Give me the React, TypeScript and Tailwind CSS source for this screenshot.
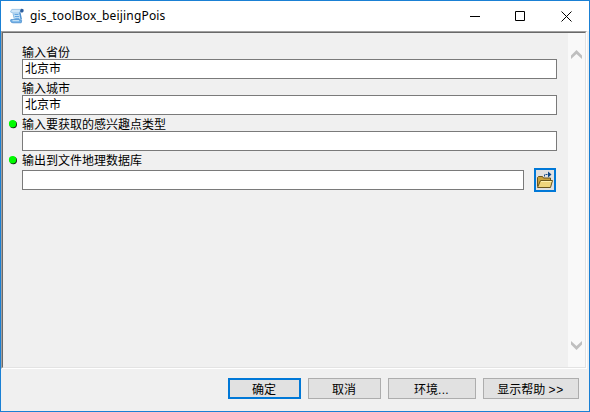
import type { ReactNode } from "react";

const cjk = "font-['Liberation_Sans','Noto_Sans_CJK_SC',sans-serif]";

function ScriptIcon() {
  return (
    <svg width="16" height="16" viewBox="0 0 16 16">
      <path d="M3.500 2H12l-1.500 3 2.300 7-2 2H4l1.500-2.500L4 6z" fill="#c6e2f7" />
      <path d="M2.800 1.400h9L10.500 5H4L1.500 4z" fill="#cfe6f8" stroke="#8dbce4" strokeWidth=".8" />
      <path d="M12 .9c2-.3 2.900.7 2.600 2-.2 1.200-1.200 1.800-2.700 1.600-.9-.4-1.100-2.200.1-3.600z" fill="#2c5f9e" />
      <path d="M10.800 4.500 12.300 11.500" stroke="#4b8fd0" strokeWidth="1.400" />
      <path d="M4 5.500l1.300 5.500" stroke="#8abce4" />
      <path d="M5.500 6.500h4M5.800 8.500h4.400M6.200 10.400h4" stroke="#5a9fdc" strokeWidth=".9" />
      <path d="M1.800 11.600h8.700l2.200 1-.5 2.200H4c-2 0-3-1.800-2.200-3.200z" fill="#73b2e8" stroke="#3f85c8" strokeWidth=".7" />
      <path d="M3.500 12.700h6.500" stroke="#d6ecfb" />
    </svg>
  );
}

function FolderIcon() {
  return (
    <svg width="18" height="18" viewBox="0 0 18 18" className="shrink-0">
      <path d="M1.500 15.500v-9l1-1h4l1 1.500h7v3" fill="#c9a13c" stroke="#6b561c" />
      <path d="M1.500 16.500 4.500 9.500h12L14.500 16.500z" fill="#efd57c" stroke="#6b561c" />
      <path d="M5 10.500h10.500" stroke="#fff1b0" />
      <path d="M8.500 5.500v-2H13" fill="none" stroke="#164a86" strokeDasharray="2 1" />
      <path d="M12 .5 15.500 3.500 12 6.500z" fill="#0d4686" />
    </svg>
  );
}

function Dot() {
  return (
    <svg width="10" height="10" viewBox="0 0 10 10" className="ml-[5px] mt-px shrink-0">
      <circle cx="5.300" cy="5.500" r="3.700" fill="#111" />
      <circle cx="4.600" cy="4.700" r="3.700" fill="#00fa00" />
    </svg>
  );
}

function Label({ children, required = false }: { children: ReactNode; required?: boolean }) {
  return (
    <div className="flex h-4 items-center">
      <div className="flex w-[19px] shrink-0">{required && <Dot />}</div>
      <span className="whitespace-nowrap pt-[3px] text-[12px] leading-4">{children}</span>
    </div>
  );
}

function Field({ value = "" }: { value?: string }) {
  return (
    <div className="ml-[19px] mr-[11px] flex h-5 items-center border border-[#7a7a7a] bg-white pl-[2px] text-[12px] leading-4">
      {value}
    </div>
  );
}

function Chevron({ down = false }: { down?: boolean }) {
  return (
    <svg width="11" height="9" viewBox="0 0 11 9" className={down ? "rotate-180" : ""}>
      <path d="M0 5.500 5.500 0 11 5.500V9L5.500 4 0 9z" fill="#bfbfbf" />
    </svg>
  );
}

function Button({ children, className }: { children: ReactNode; className: string }) {
  return (
    <button className={`flex h-[21px] items-center justify-center whitespace-nowrap bg-[#e1e1e1] text-[12px] leading-4 ${className}`}>
      <span className="mr-px pt-[2px]">{children}</span>
    </button>
  );
}

export default function App() {
  return (
    <div className={`flex h-[412px] w-[590px] flex-col border border-[#1a80d4] bg-[#f0f0f0] text-black ${cjk}`}>
      <header className="flex h-[30px] shrink-0 items-center bg-white pl-2">
        <ScriptIcon />
        <span className="ml-[5px] font-['Noto_Sans',sans-serif] text-[12px] leading-4 tracking-[0.17px]">gis_toolBox_beijingPois</span>
        <svg width="102" height="12" viewBox="0 0 102 12" className="ml-auto mr-[17px]" fill="none" stroke="#000">
          <path d="M0 6.500h10" />
          <path d="M45.500 1.500h9v9h-9z" />
          <path d="M91.500 1.500l10 10M101.500 1.500l-10 10" />
        </svg>
      </header>
      <div className="mr-[2px] h-[338px] shrink-0 border border-b-white border-l-[#a0a0a0] border-r-white border-t-[#a0a0a0]">
        <div className="flex h-full border border-b-[#e3e3e3] border-l-[#696969] border-r-[#e3e3e3] border-t-[#696969]">
          <main className="flex-1 pt-[10px]">
            <Label>输入省份</Label>
            <Field value="北京市" />
            <Label>输入城市</Label>
            <Field value="北京市" />
            <Label required>输入要获取的感兴趣点类型</Label>
            <Field />
            <Label required>输出到文件地理数据库</Label>
            <div className="mt-px flex items-center">
              <div className="flex-1">
                <div className="ml-[19px] mr-[10px] h-5 border border-[#7a7a7a] bg-white" />
              </div>
              <button className="mr-3 flex h-6 w-[22px] items-center justify-center border-2 border-[#0078d7] bg-[#e1e1e1]">
                <FolderIcon />
              </button>
            </div>
          </main>
          <aside className="flex w-[17px] flex-col items-center justify-between bg-[#f9f9f9] pb-[17px] pt-[17px]">
            <Chevron />
            <Chevron down />
          </aside>
        </div>
      </div>
      <footer className="flex gap-[7px] pl-[227px] pt-[9px]">
        <Button className="w-[73px] border-2 border-[#0078d7]">确定</Button>
        <Button className="w-[73px] border border-[#adadad]">取消</Button>
        <Button className="w-[88px] border border-[#adadad]">
          环境<span className="tracking-[0.4px]">...</span>
        </Button>
        <Button className="w-[96px] border border-[#adadad]">
          显示帮助 <span className="tracking-[0.6px]">&gt;&gt;</span>
        </Button>
      </footer>
    </div>
  );
}
